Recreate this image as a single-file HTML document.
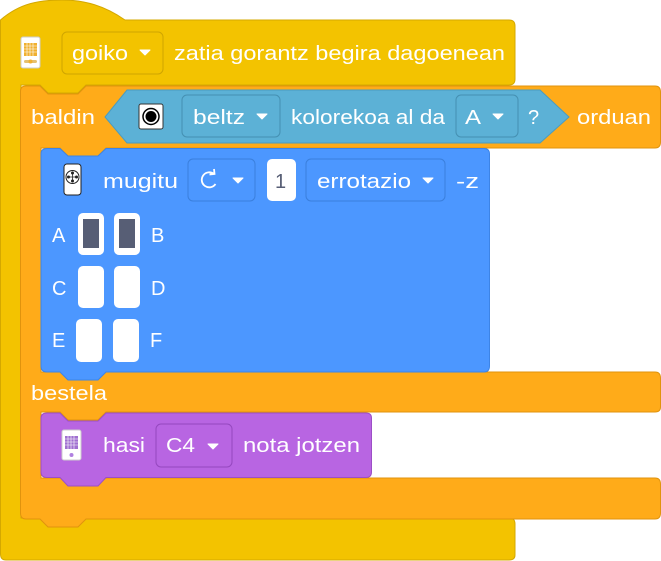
<!DOCTYPE html>
<html><head><style>
html,body{margin:0;padding:0;background:#fff;}
svg{display:block;}
text{font-family:"Liberation Sans",sans-serif;font-size:20px;fill:#fff;}
</style></head><body>
<svg width="661" height="561" viewBox="0 0 661 561" xmlns="http://www.w3.org/2000/svg">
<path d="M0.5,20 C20,3 40,0 62,0 C85,0 105,6 125,20 L509,20 Q515,20 515,26 L515,79 Q515,85 509,85 L86,85 L78,93 L48,93 L40,85 L21,85 L21,518 L509,518 Q515,518 515,524 L515,555 Q515,560 509,560 L6,560 Q0.5,560 0.5,554 Z" fill="#f3c300" stroke="#d4a800" stroke-width="1"/>
<path d="M20.5,91 Q20.5,86 26,86 L40,86 L48,94 L78,94 L86,86 L655,86 Q660.5,86 660.5,92 L660.5,142 Q660.5,148 655,148 L106,148 L98,156 L68,156 L60,148 L41,148 L41,372 L655,372 Q660.5,372 660.5,378 L660.5,407 Q660.5,412 655,412 L106,412 L98,420 L68,420 L60,412 L41,412 L41,478 L655,478 Q660.5,478 660.5,484 L660.5,513 Q660.5,519 655,519 L86,519 L78,527 L48,527 L40,519 L26,519 Q20.5,519 20.5,513 Z" fill="#ffab19" stroke="#e0930d" stroke-width="1"/>
<path d="M127,90 L540,90 L569,117 L540,143 L127,143 L105,117 Z" fill="#5cb1d6" stroke="#4a9cc0" stroke-width="1"/>
<path d="M41,154 Q41,148.5 47,148.5 L60,148.5 L68,156 L98,156 L106,148.5 L484,148.5 Q489.5,148.5 489.5,154 L489.5,366 Q489.5,372 484,372 L106,372 L98,380 L68,380 L60,372 L47,372 Q41,372 41,366 Z" fill="#4c97ff" stroke="#3d84e6" stroke-width="1"/>
<path d="M41,418 Q41,413 47,413 L60,413 L68,421 L98,421 L106,413 L366,413 Q371.5,413 371.5,418 L371.5,472 Q371.5,477.5 366,477.5 L106,477.5 L98,486 L68,486 L60,477.5 L47,477.5 Q41,477.5 41,472 Z" fill="#b865e2" stroke="#9c4fc6" stroke-width="1"/>

<rect x="21" y="37" width="19" height="31" rx="2" fill="#fff" stroke="#ccc"/>
<rect x="24" y="43" width="13" height="13" fill="#f0b030"/>
<g stroke="#fff" stroke-width="0.6"><path d="M24,46H37M24,49H37M24,52H37M27,43V56M30,43V56M33,43V56"/></g>
<rect x="24" y="60" width="13" height="3" rx="1.5" fill="#e5c070"/>
<circle cx="30.5" cy="61.5" r="2" fill="#f0b030"/>
<rect x="62" y="32" width="101" height="42" rx="5" fill="#f3c300" stroke="#cfa500"/>
<text x="72" y="60" textLength="56" lengthAdjust="spacingAndGlyphs">goiko</text>
<path d="M140,50h10l-5,5z" fill="#fff" stroke="#fff" stroke-linejoin="round"/>
<text x="174" y="60" textLength="331" lengthAdjust="spacingAndGlyphs">zatia gorantz begira dagoenean</text>

<text x="31" y="124" textLength="64" lengthAdjust="spacingAndGlyphs">baldin</text>
<rect x="139" y="104" width="24" height="25" rx="2" fill="#fff" stroke="#333"/>
<circle cx="151" cy="116.5" r="8" fill="#fff" stroke="#000" stroke-width="1.5"/>
<circle cx="151" cy="116.5" r="5.5" fill="#000"/>
<rect x="182" y="95" width="98" height="42" rx="5" fill="#5cb1d6" stroke="#4590b2"/>
<text x="193" y="124" textLength="52" lengthAdjust="spacingAndGlyphs">beltz</text>
<path d="M257,114h10l-5,5z" fill="#fff" stroke="#fff" stroke-linejoin="round"/>
<text x="291" y="124" textLength="154" lengthAdjust="spacingAndGlyphs">kolorekoa al da</text>
<rect x="456" y="95" width="62" height="42" rx="5" fill="#5cb1d6" stroke="#4590b2"/>
<text x="465" y="124" textLength="16" lengthAdjust="spacingAndGlyphs">A</text>
<path d="M493,114h10l-5,5z" fill="#fff" stroke="#fff" stroke-linejoin="round"/>
<text x="528" y="124">?</text>
<text x="577" y="124" textLength="74" lengthAdjust="spacingAndGlyphs">orduan</text>

<rect x="64" y="164" width="17" height="31" rx="3" fill="#fff" stroke="#222"/>
<circle cx="72.5" cy="177" r="6.5" fill="#fff" stroke="#222"/>
<g fill="#222"><circle cx="72.5" cy="173" r="1.5"/><circle cx="72.5" cy="181" r="1.5"/><circle cx="68.5" cy="177" r="1.5"/><circle cx="76.5" cy="177" r="1.5"/></g>
<path d="M67,177h11M72.5,171.5v11" stroke="#222" stroke-width="0.8"/>
<text x="103" y="188" textLength="75" lengthAdjust="spacingAndGlyphs">mugitu</text>
<rect x="188" y="159" width="67" height="42" rx="5" fill="#4c97ff" stroke="#3a7fdc"/>
<path d="M215.5,184 A7.5,7.5 0 1 1 214,174" fill="none" stroke="#fff" stroke-width="1.8"/>
<path d="M209.5,174.5 L214.5,174 L214,169" fill="none" stroke="#fff" stroke-width="1.8"/>
<path d="M233,178h10l-5,5z" fill="#fff" stroke="#fff" stroke-linejoin="round"/>
<rect x="267" y="159" width="29" height="42" rx="5" fill="#fff"/>
<text x="275" y="188" style="fill:#575e75">1</text>
<rect x="306" y="159" width="139" height="42" rx="5" fill="#4c97ff" stroke="#3a7fdc"/>
<text x="317" y="188" textLength="94" lengthAdjust="spacingAndGlyphs">errotazio</text>
<path d="M423,178h10l-5,5z" fill="#fff" stroke="#fff" stroke-linejoin="round"/>
<text x="456" y="188" textLength="23" lengthAdjust="spacingAndGlyphs">-z</text>

<text x="52" y="242">A</text>
<rect x="78" y="213" width="26" height="42" rx="5" fill="#fff"/>
<rect x="83" y="219" width="16" height="29" fill="#575e75"/>
<rect x="114" y="213" width="26" height="42" rx="5" fill="#fff"/>
<rect x="119" y="219" width="16" height="29" fill="#575e75"/>
<text x="151" y="242">B</text>
<text x="52" y="295">C</text>
<rect x="78" y="266" width="26" height="42" rx="5" fill="#fff"/>
<rect x="114" y="266" width="26" height="42" rx="5" fill="#fff"/>
<text x="151" y="295">D</text>
<text x="52" y="347">E</text>
<rect x="76" y="319" width="26" height="43" rx="5" fill="#fff"/>
<rect x="113" y="319" width="26" height="43" rx="5" fill="#fff"/>
<text x="150" y="347">F</text>

<text x="31" y="400" textLength="76" lengthAdjust="spacingAndGlyphs">bestela</text>

<rect x="62" y="430" width="19" height="30" rx="2" fill="#fff" stroke="#ccc"/>
<rect x="65" y="436" width="13" height="13" fill="#a070d0"/>
<g stroke="#fff" stroke-width="0.6"><path d="M65,439H78M65,442H78M65,445H78M68,436V449M71,436V449M74,436V449"/></g>
<circle cx="71.5" cy="455" r="2" fill="#b080e0"/>
<text x="103" y="452" textLength="42" lengthAdjust="spacingAndGlyphs">hasi</text>
<rect x="156" y="424" width="76" height="43" rx="5" fill="#b865e2" stroke="#9548bf"/>
<text x="166" y="452" textLength="29" lengthAdjust="spacingAndGlyphs">C4</text>
<path d="M208,444h10l-5,5z" fill="#fff" stroke="#fff" stroke-linejoin="round"/>
<text x="243" y="452" textLength="117" lengthAdjust="spacingAndGlyphs">nota jotzen</text>
</svg>
</body></html>
